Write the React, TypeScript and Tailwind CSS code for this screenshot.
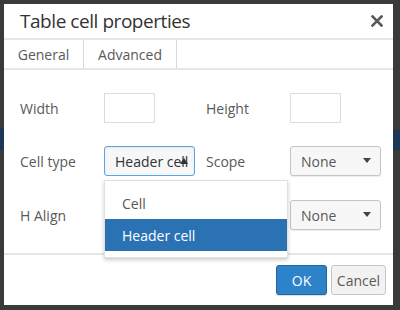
import React from "react";

const font = { fontFamily: '"Open Sans", "Noto Sans", Arial, sans-serif' };

function Caret({ up = false }: { up?: boolean }) {
  return (
    <svg width="8" height="6" viewBox="0 0 8 6" className="block">
      {up ? <polygon points="0,6 8,6 4,0" fill="#333" /> : <polygon points="0,0 8,0 4,5" fill="#444" />}
    </svg>
  );
}

function Select({ value }: { value: string }) {
  return (
    <div className="w-[91px] h-[30px] flex items-center justify-between pl-[10px] pr-[9px] border border-[#c5c5c5] rounded-[3px] bg-[#f7f7f7] shadow-[0_1px_1px_rgba(0,0,0,0.08)] text-[14px] text-[#595959]">
      <span>{value}</span>
      <Caret />
    </div>
  );
}

export default function App() {
  return (
    <div style={font} className="w-[400px] h-[310px] bg-[#3a3a3a] pt-[4px] pl-[4px] pr-[7px] pb-[5px] relative overflow-hidden">
      <div className="absolute left-0 top-[128px] w-[4px] h-[22px] bg-[#1d3557]" />
      <div className="absolute right-0 top-[130px] w-[7px] h-[20px] bg-[#1d3557]" />
      <div className="relative bg-white w-full h-full flex flex-col">
        {/* Header */}
        <div className="h-[36px] flex items-center justify-between pl-[16px] pr-[10px] border-b-2 border-[#e6e6e6]">
          <span className="text-[19px] text-[#333] leading-none tracking-[-0.45px]">Table cell properties</span>
          <svg width="12" height="12" viewBox="0 0 12 12">
            <path d="M1.5 1.5 L10.5 10.5 M10.5 1.5 L1.5 10.5" stroke="#595959" strokeWidth="2.6" strokeLinecap="square" />
          </svg>
        </div>
        {/* Tabs */}
        <div className="h-[30px] flex border-b-2 border-[#e6e6e6] text-[14px] text-[#595959]">
          <div className="w-[79px] flex items-center justify-center bg-white">General</div>
          <div className="w-[94px] flex items-center justify-center border-l border-r border-[#d9d9d9]">Advanced</div>
        </div>
        {/* Form */}
        <div className="flex-1 pl-[16px] pt-[23px] text-[14px] text-[#595959]">
          <div className="flex items-center h-[30px]">
            <div className="w-[84px]">Width</div>
            <div className="w-[102px]">
              <div className="w-[51px] h-[30px] border border-[#dcdcdc]" />
            </div>
            <div className="w-[84px]">Height</div>
            <div className="w-[51px] h-[30px] border border-[#dcdcdc]" />
          </div>
          <div className="flex items-center h-[30px] mt-[23px]">
            <div className="w-[84px]">Cell type</div>
            <div className="w-[102px]">
              <div className="w-[91px] h-[30px] flex items-center pl-[10px] border border-[#59a5e5] rounded-[3px] bg-[#f7f7f7] shadow-[inset_0_1px_2px_rgba(0,0,0,0.08)] overflow-hidden relative text-[#333]">
                <span className="whitespace-nowrap">Header cell</span>
                <div className="absolute left-[75px] top-[11px]">
                  <Caret up />
                </div>
              </div>
            </div>
            <div className="w-[84px]">Scope</div>
            <Select value="None" />
          </div>
          <div className="flex items-center h-[30px] mt-[24px]">
            <div className="w-[186px]">H Align</div>
            <div className="w-[84px]"></div>
            <Select value="None" />
          </div>
        </div>
        {/* Footer */}
        <div className="h-[52px] border-t-2 border-[#e6e6e6] flex justify-end items-start pt-[10px] pr-[7px] gap-[4px]">
          <button className="w-[51px] h-[30px] rounded-[3px] bg-[#2d82c9] border border-[#1f65a3] text-white text-[14px] shadow-[0_1px_1px_rgba(0,0,0,0.15)]">
            OK
          </button>
          <button className="w-[55px] h-[30px] rounded-[3px] bg-[#f2f2f2] border border-[#c5c5c5] text-[#595959] text-[14px]">
            Cancel
          </button>
        </div>
        {/* Dropdown menu */}
        <div className="absolute left-[100px] top-[176px] w-[184px] h-[78px] bg-white border border-[#e0e0e0] shadow-[0_2px_4px_rgba(0,0,0,0.2)] pt-[6px] text-[14px]">
          <div className="h-[32px] flex items-center pl-[17px] text-[#595959]">Cell</div>
          <div className="h-[32px] flex items-center pl-[17px] bg-[#2b72b5] text-white">Header cell</div>
        </div>
      </div>
    </div>
  );
}
